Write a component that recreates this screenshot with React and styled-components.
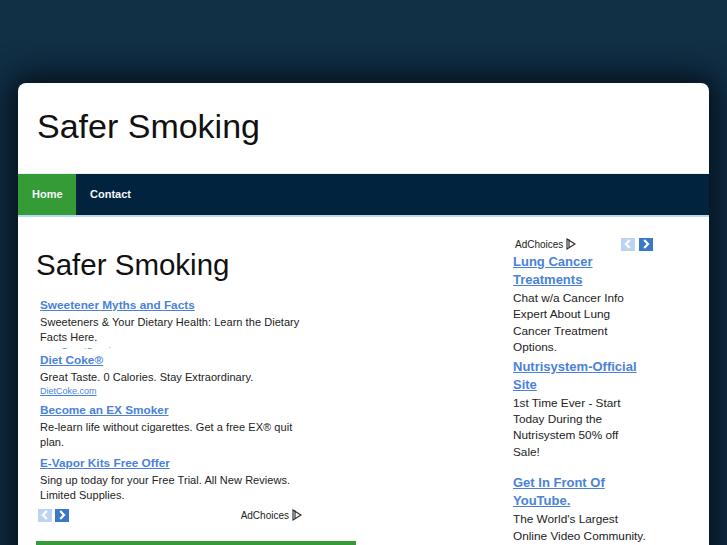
import React from "react";
import styled, { createGlobalStyle } from "styled-components";

const leftAds = [
  { title: "Sweetener Myths and Facts", text: "Sweeteners & Your Dietary Health: Learn the Dietary Facts Here.", url: "www.SweetSurprise.com", height: 54 },
  { title: "Diet Coke®", text: "Great Taste. 0 Calories. Stay Extraordinary.", url: "DietCoke.com", height: 49 },
  { title: "Become an EX Smoker", text: "Re-learn life without cigarettes. Get a free EX® quit plan.", url: "BecomeAnEX.org", height: 52 },
  { title: "E-Vapor Kits Free Offer", text: "Sing up today for your Free Trial. All New Reviews. Limited Supplies.", url: "E-Vapor.com", height: 52 },
];

const rightAds = [
  { title: "Lung Cancer Treatments", text: "Chat w/a Cancer Info Expert About Lung Cancer Treatment Options.", gap: 2 },
  { title: "Nutrisystem-Official Site", text: "1st Time Ever - Start Today During the Nutrisystem 50% off Sale!", gap: 14 },
  { title: "Get In Front Of YouTube.", text: "The World's Largest Online Video Community.", gap: 0 },
];

function Chevron({ back }) {
  return (
    <svg width="14" height="14" viewBox="0 0 14 14">
      <path
        d={back ? "M8.8 3 L5 7 L8.8 11" : "M5.2 3 L9 7 L5.2 11"}
        fill="none"
        stroke="#fff"
        strokeWidth="2.2"
      />
    </svg>
  );
}

function AdChoices() {
  return (
    <StChoices>
      AdChoices
      <svg width="10" height="12" viewBox="0 0 10 12">
        <path d="M1 1 L1 11 L9 6 Z M3 1.2 L3 9" fill="none" stroke="#222" strokeWidth="1.1" />
      </svg>
    </StChoices>
  );
}

function Arrows({ gap }) {
  return (
    <StArrows $gap={gap}>
      <StArrow $off>
        <Chevron back />
      </StArrow>
      <StArrow>
        <Chevron />
      </StArrow>
    </StArrows>
  );
}

function App() {
  return (
    <StPage>
      <GlobalStyle />
      <StWrap>
        <StHeader>
          <StLogo>Safer Smoking</StLogo>
        </StHeader>
        <StNav>
          <StNavItem $active>Home</StNavItem>
          <StNavItem>Contact</StNavItem>
        </StNav>
        <StBody>
          <StMain>
            <StHeading>Safer Smoking</StHeading>
            <StLeftAds>
              {leftAds.map((ad) => (
                <StLeftAd key={ad.title} $height={ad.height}>
                  <StLeftTitle>{ad.title}</StLeftTitle>
                  <StLeftText>{ad.text}</StLeftText>
                  <StLeftUrl>{ad.url}</StLeftUrl>
                </StLeftAd>
              ))}
            </StLeftAds>
            <StLeftFoot>
              <Arrows gap={3} />
              <AdChoices />
            </StLeftFoot>
            <StGreenBar />
          </StMain>
          <StSide>
            <StSideTop>
              <AdChoices />
              <Arrows gap={4} />
            </StSideTop>
            {rightAds.map((ad) => (
              <StSideAd key={ad.title} $gap={ad.gap}>
                <StSideTitle>{ad.title}</StSideTitle>
                <StSideText>{ad.text}</StSideText>
              </StSideAd>
            ))}
          </StSide>
        </StBody>
      </StWrap>
    </StPage>
  );
}

export default App;

const GlobalStyle = createGlobalStyle`
  html, body {
    margin: 0;
    padding: 0;
    height: 545px;
    overflow: hidden;
    background: #112f45;
    font-family: "Liberation Sans", Arial, sans-serif;
  }
`;

const StPage = styled.div`
  height: 545px;
  overflow: hidden;
  padding: 83px 18px 0;
  box-sizing: border-box;
  background: #112f45;
`;

const StWrap = styled.div`
  height: 600px;
  background: #fff;
  border-radius: 8px 8px 0 0;
  box-shadow: 0 0 30px 8px rgba(0, 10, 20, 0.85);
  overflow: hidden;
`;

const StHeader = styled.div`
  height: 91px;
  padding: 23px 0 0 19px;
  box-sizing: border-box;
  border-bottom: 1px solid #e6f1f8;
`;

const StLogo = styled.div`
  font-size: 34px;
  line-height: 40px;
  color: #111;
`;

const StNav = styled.div`
  display: flex;
  height: 41px;
  background: #02233e;
  border-bottom: 2px solid #b5dcf0;
`;

const StNavItem = styled.div`
  display: flex;
  align-items: center;
  padding: 0 13.5px 2px 14px;
  font-size: 11px;
  font-weight: bold;
  color: #f4f6f8;
  background: ${(props) => (props.$active ? "#349b37" : "transparent")};
`;

const StBody = styled.div`
  display: flex;
  padding: 0 0 0 18px;
`;

const StMain = styled.div`
  width: 320px;
  padding-top: 30px;
`;

const StHeading = styled.h1`
  margin: 0 0 12px;
  font-size: 29.5px;
  font-weight: normal;
  line-height: 36px;
  color: #111;
`;

const StLeftAds = styled.div`
  padding-left: 4px;
  width: 270px;
`;

const StLeftAd = styled.div`
  height: ${(props) => props.$height}px;
  margin-bottom: 1px;
  overflow: hidden;
  box-sizing: border-box;
`;

const StLeftTitle = styled.a`
  display: inline-block;
  margin-bottom: 1px;
  font-size: 11.8px;
  font-weight: bold;
  line-height: 17px;
  color: #4a82d8;
  text-decoration: underline;
`;

const StLeftText = styled.div`
  font-size: 11px;
  line-height: 15px;
  letter-spacing: 0.05px;
  color: #222;
`;

const StLeftUrl = styled.div`
  font-size: 9px;
  line-height: 12px;
  color: #4a82d8;
  text-decoration: underline;
`;

const StLeftFoot = styled.div`
  display: flex;
  align-items: center;
  justify-content: space-between;
  width: 264px;
  margin-top: 2px;
  padding-left: 2px;
  height: 16px;
`;

const StGreenBar = styled.div`
  height: 5px;
  margin-top: 18px;
  background: #349b37;
`;

const StSide = styled.div`
  width: 140px;
  margin-left: 157px;
  padding-top: 19px;
`;

const StSideTop = styled.div`
  display: flex;
  align-items: center;
  justify-content: space-between;
  padding-left: 2px;
  height: 16px;
  margin-bottom: 1px;
`;

const StSideAd = styled.div`
  width: 134px;
  margin-bottom: ${(props) => props.$gap}px;
`;

const StSideTitle = styled.a`
  display: block;
  width: 126px;
  font-size: 13px;
  font-weight: bold;
  line-height: 18px;
  color: #4a82d8;
  text-decoration: underline;
`;

const StSideText = styled.div`
  margin-top: 1px;
  font-size: 11.8px;
  line-height: 16.4px;
  color: #222;
`;

const StChoices = styled.div`
  display: flex;
  align-items: center;
  gap: 3px;
  font-size: 10px;
  color: #222;
`;

const StArrows = styled.div`
  display: flex;
  gap: ${(props) => props.$gap}px;
`;

const StArrow = styled.div`
  width: 14px;
  height: 13px;
  display: flex;
  align-items: center;
  justify-content: center;
  background: ${(props) => (props.$off ? "#bcd4f2" : "#3a78cc")};
`;
